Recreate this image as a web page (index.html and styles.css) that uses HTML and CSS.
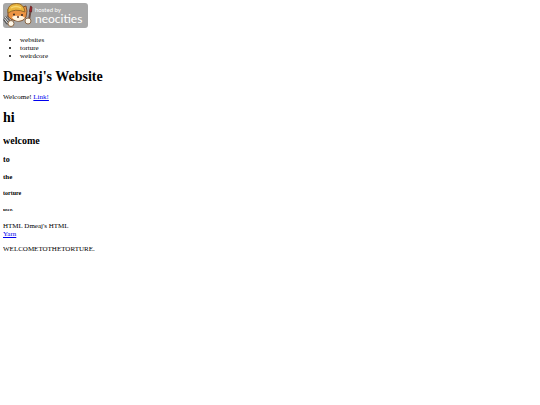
FILE: index.html
```html
<!DOCTYPE html>
<html lang="en">
<head>
<meta charset="utf-8">
<title>Dmeaj's Website</title>
<link rel="stylesheet" href="styles.css">
</head>
<body>
<a class="badge" href="#" aria-label="Hosted by Neocities">
<svg class="cat" viewBox="0 0 30 26" aria-hidden="true">
<path d="M2 14l5 6M5 12l3 6M1 16l3 4 5 1" stroke="#555" stroke-width="2.6" fill="none"/>
<path d="M2 14l5 6M5 12l3 6M1.500 16l3 4 4 0" stroke="#e8e8e8" stroke-width="1" fill="none"/>
<path d="M28 5l-2 12" stroke="#6b4a40" stroke-width="2" stroke-linecap="round"/>
<path d="M27.500 3l1.500 1-.5 5-2-.5z" fill="#b0222c" stroke="#5b2020" stroke-width=".7"/>
<path d="M5 10L5 6l4-2Q16 1 20 4l3-1 1 5-1 6q-3 5-9 4-7-1-9-5z" fill="#ec9444" stroke="#7b5130" stroke-width="1"/>
<path d="M9 14q3-2 6-1 4-1 7 2-3 3-7 3-5-1-6-4z" fill="#fff4df"/>
<path d="M5 10Q4 3 10 1q8-2 11 4l1 4Q12 5 5 10z" fill="#e9b63f" stroke="#94692a" stroke-width="1"/>
<path d="M8 5q5-3 10 0" fill="none" stroke="#f7d873" stroke-width="1.300"/>
<circle cx="11" cy="11.500" r="1" fill="#3b2920"/><circle cx="19" cy="12" r="1" fill="#3b2920"/>
<path d="M14 14h2" stroke="#5b3227" stroke-width="1.300"/>
<circle cx="8" cy="20.500" r="3" fill="#fff8e9" stroke="#8b6848" stroke-width="1"/>
<circle cx="25" cy="18" r="3" fill="#fff8e9" stroke="#8b6848" stroke-width="1"/>
</svg>
<span class="brand"><span class="hosted">hosted by</span><span class="name">neocities</span></span>
</a>
<ul>
<li>websites</li>
<li>torture</li>
<li>weirdcore</li>
</ul>
<h1>Dmeaj's Website</h1>
<p>Welcome! <a href="#">Link!</a></p>
<h1>hi</h1>
<h2>welcome</h2>
<h3>to</h3>
<h4>the</h4>
<h5>torture</h5>
<h6>user.</h6>
<div>HTML Dmeaj's HTML</div>
<a href="#">Yarn</a>
<p>WELCOMETOTHETORTURE.</p>
</body>
</html>
```

FILE: styles.css
```css
body {
  margin: 3px;
  font: 7px/8px "Liberation Serif", serif;
  color: #000;
  background: #fff;
}
a { color: #0000ee; }
.badge {
  display: flex;
  width: 85px;
  height: 25px;
  border-radius: 3px;
  background: #a8a8a8;
  color: #fff;
  text-decoration: none;
}
.cat {
  width: 30px;
  height: 26px;
}
.brand {
  display: flex;
  flex-direction: column;
  padding: 3px 0 0 2px;
  font-family: Lato, sans-serif;
}
.hosted { font-size: 6px; line-height: 8px; }
.name { font-size: 12px; line-height: 10px; }
ul { margin: 8px 0; padding-left: 17px; }
h1 { margin: 9px 0 8px; font-size: 14px; line-height: 16px; }
h2 { margin: 9px 0; font-size: 10px; line-height: 11px; }
h3 { margin: 8px 0; font-size: 8px; line-height: 9px; }
h4 { margin: 9px 0; font-size: 7px; line-height: 8px; }
h5 { margin: 9px 0; font-size: 6px; line-height: 7px; }
h6 { margin: 10px 0 9px; font-size: 5px; line-height: 6px; }
p { margin: 7px 0; }
```
